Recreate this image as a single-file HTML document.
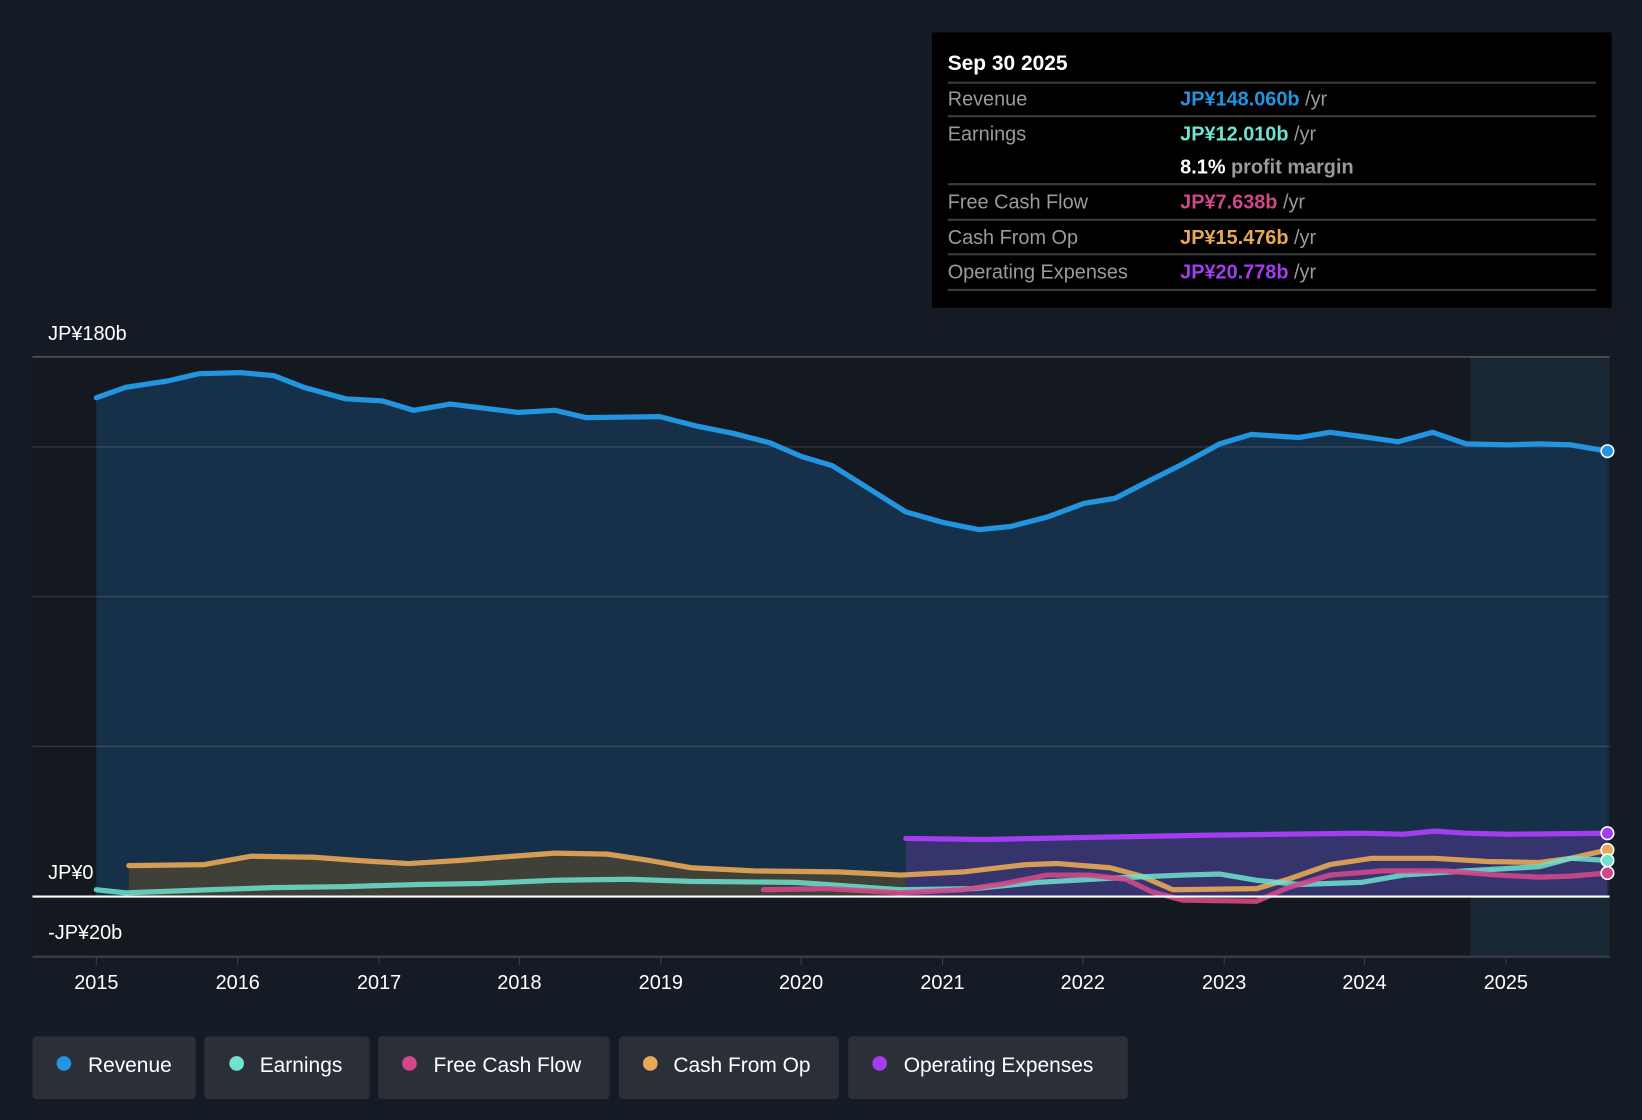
<!DOCTYPE html>
<html><head><meta charset="utf-8"><style>
html,body{margin:0;padding:0;background:#151b24;width:1642px;height:1120px;overflow:hidden}
svg{display:block}
text{font-family:"Liberation Sans",sans-serif}
</style></head><body>
<svg width="1642" height="1120" viewBox="0 0 1568 1070" preserveAspectRatio="none" xmlns="http://www.w3.org/2000/svg">
<rect width="1568" height="1070" fill="#151b24"/>
<!-- plot bg -->
<rect x="31" y="341" width="1506" height="573" fill="#141920"/>
<rect x="1404" y="341" width="133" height="573" fill="#1a2836" opacity="0.9"/>
<!-- revenue area -->
<path d="M92,380 L120,370 L160,364 L190,357 L230,356 L262,359 L290,370 L330,381 L365,383 L395,392 L430,386 L495,394 L530,392 L560,399 L630,398 L665,407 L700,414 L735,423 L765,436 L795,445 L830,467 L865,489 L900,499 L935,506 L965,503 L1000,494 L1035,481 L1065,476 L1100,458 L1130,443 L1165,424 L1195,415 L1240,418 L1270,413 L1300,417 L1335,422 L1368,413 L1400,424 L1440,425 L1470,424 L1500,425 L1535,431 L1535,856 L92,856 Z" fill="#173049"/>
<!-- grid -->
<g stroke="#ffffff" stroke-opacity="0.15" stroke-width="1">
<line x1="31" y1="341" x2="1537" y2="341" stroke-opacity="0.35"/>
<line x1="31" y1="427" x2="1537" y2="427"/>
<line x1="31" y1="570" x2="1537" y2="570"/>
<line x1="31" y1="713" x2="1537" y2="713"/>
</g>
<!-- opex area -->
<path d="M865,801 L940,802 L1040,800 L1150,798 L1300,796 L1340,797 L1370,794 L1400,796 L1440,797 L1535,796 L1535,856 L865,856 Z" fill="#5b3a9a" opacity="0.45"/>
<!-- cfo area -->
<path d="M123,827 L195,826 L240,818 L300,819 L340,822 L390,825 L440,822 L490,818 L530,815 L580,816 L620,822 L660,829 L720,832 L800,833 L860,836 L865,836 L865,856 L123,856 Z" fill="#4a4636" opacity="0.8"/>
<g fill="none" stroke-width="5" stroke-linejoin="round" stroke-linecap="round">
<polyline stroke="#a33df0" points="865,801 940,802 1040,800 1150,798 1300,796 1340,797 1370,794 1400,796 1440,797 1535,796"/>
<polyline stroke="#e8a957" stroke-opacity="0.9" points="123,827 195,826 240,818 300,819 340,822 390,825 440,822 490,818 530,815 580,816 620,822 660,829 720,832 800,833 860,836 920,833 980,826 1010,825 1060,829 1090,837 1120,850 1200,849 1230,840 1270,826 1310,820 1370,820 1420,823 1470,824 1500,820 1535,812"/>
<polyline stroke="#6fe3d0" stroke-opacity="0.85" points="92,850 120,853 200,850 260,848 330,847 400,845 460,844 530,841 600,840 660,842 760,843 860,850 930,849 990,843 1060,839 1130,836 1165,835 1200,841 1240,845 1300,843 1340,836 1400,832 1470,828 1500,820 1535,822"/>
<polyline stroke="#d0488a" stroke-opacity="0.9" points="729,850 790,849 860,853 920,850 960,844 1000,836 1040,836 1075,840 1100,852 1130,860 1200,861 1230,848 1270,836 1320,832 1380,832 1430,836 1470,838 1500,837 1535,834"/>
<polyline stroke="#2394e0" points="92,380 120,370 160,364 190,357 230,356 262,359 290,370 330,381 365,383 395,392 430,386 495,394 530,392 560,399 630,398 665,407 700,414 735,423 765,436 795,445 830,467 865,489 900,499 935,506 965,503 1000,494 1035,481 1065,476 1100,458 1130,443 1165,424 1195,415 1240,418 1270,413 1300,417 1335,422 1368,413 1400,424 1440,425 1470,424 1500,425 1535,431"/>
</g>
<line x1="31" y1="856.5" x2="1537" y2="856.5" stroke="#fff" stroke-width="2"/>
<!-- end dots -->
<g stroke="#fff" stroke-width="1.5">
<circle cx="1535" cy="431" r="6" fill="#2394e0"/>
<circle cx="1535" cy="796" r="6" fill="#a33df0"/>
<circle cx="1535" cy="812" r="6" fill="#e8a957"/>
<circle cx="1535" cy="822" r="6" fill="#6fe3d0"/>
<circle cx="1535" cy="834" r="6" fill="#d0488a"/>
</g>
<!-- axis -->
<line x1="31" y1="914" x2="1537" y2="914" stroke="#3a4049" stroke-width="2"/>
<g stroke="#3a4049" stroke-width="1">
<line x1="92" y1="914" x2="92" y2="922"/><line x1="227" y1="914" x2="227" y2="922"/><line x1="362" y1="914" x2="362" y2="922"/><line x1="496" y1="914" x2="496" y2="922"/><line x1="631" y1="914" x2="631" y2="922"/><line x1="765" y1="914" x2="765" y2="922"/><line x1="900" y1="914" x2="900" y2="922"/><line x1="1034" y1="914" x2="1034" y2="922"/><line x1="1169" y1="914" x2="1169" y2="922"/><line x1="1303" y1="914" x2="1303" y2="922"/><line x1="1438" y1="914" x2="1438" y2="922"/>
</g>
<g fill="#fff" font-size="19" text-anchor="middle">
<text x="92" y="945">2015</text><text x="227" y="945">2016</text><text x="362" y="945">2017</text><text x="496" y="945">2018</text><text x="631" y="945">2019</text><text x="765" y="945">2020</text><text x="900" y="945">2021</text><text x="1034" y="945">2022</text><text x="1169" y="945">2023</text><text x="1303" y="945">2024</text><text x="1438" y="945">2025</text>
</g>
<g fill="#fff" font-size="19">
<text x="46" y="325">JP¥180b</text>
<text x="46" y="840">JP¥0</text>
<text x="46" y="897">-JP¥20b</text>
</g>
<!-- tooltip -->
<rect x="890" y="31" width="649" height="263" fill="#000"/>
<text x="905" y="67" fill="#fff" font-size="20" font-weight="bold">Sep 30 2025</text>
<g stroke="#3c3c3c" stroke-width="2">
<line x1="905" y1="79" x2="1524" y2="79"/><line x1="905" y1="111" x2="1524" y2="111"/><line x1="905" y1="176" x2="1524" y2="176"/><line x1="905" y1="210" x2="1524" y2="210"/><line x1="905" y1="243" x2="1524" y2="243"/><line x1="905" y1="277" x2="1524" y2="277"/>
</g>
<g font-size="19" fill="#9a9a9a">
<text x="905" y="101">Revenue</text>
<text x="905" y="134">Earnings</text>
<text x="905" y="199">Free Cash Flow</text>
<text x="905" y="233">Cash From Op</text>
<text x="905" y="266">Operating Expenses</text>
</g>
<g font-size="19" font-weight="bold">
<text x="1127" y="101" fill="#2394e0">JP¥148.060b <tspan fill="#9a9a9a" font-weight="normal">/yr</tspan></text>
<text x="1127" y="134" fill="#6fe3d0">JP¥12.010b <tspan fill="#9a9a9a" font-weight="normal">/yr</tspan></text>
<text x="1127" y="166" fill="#fff">8.1% <tspan fill="#9a9a9a">profit margin</tspan></text>
<text x="1127" y="199" fill="#d0488a">JP¥7.638b <tspan fill="#9a9a9a" font-weight="normal">/yr</tspan></text>
<text x="1127" y="233" fill="#e8a957">JP¥15.476b <tspan fill="#9a9a9a" font-weight="normal">/yr</tspan></text>
<text x="1127" y="266" fill="#a33df0">JP¥20.778b <tspan fill="#9a9a9a" font-weight="normal">/yr</tspan></text>
</g>
<!-- legend -->
<g fill="#2a2f38">
<rect x="31" y="990" width="156" height="60" rx="4"/>
<rect x="195" y="990" width="158" height="60" rx="4"/>
<rect x="361" y="990" width="221" height="60" rx="4"/>
<rect x="591" y="990" width="210" height="60" rx="4"/>
<rect x="810" y="990" width="267" height="60" rx="4"/>
</g>
<circle cx="61" cy="1016" r="7" fill="#2394e0"/>
<circle cx="226" cy="1016" r="7" fill="#6fe3d0"/>
<circle cx="391" cy="1016" r="7" fill="#d0488a"/>
<circle cx="621" cy="1016" r="7" fill="#e8a957"/>
<circle cx="840" cy="1016" r="7" fill="#a33df0"/>
<g fill="#fff" font-size="20">
<text x="84" y="1024">Revenue</text>
<text x="248" y="1024">Earnings</text>
<text x="414" y="1024">Free Cash Flow</text>
<text x="643" y="1024">Cash From Op</text>
<text x="863" y="1024">Operating Expenses</text>
</g>
</svg>
</body></html>
